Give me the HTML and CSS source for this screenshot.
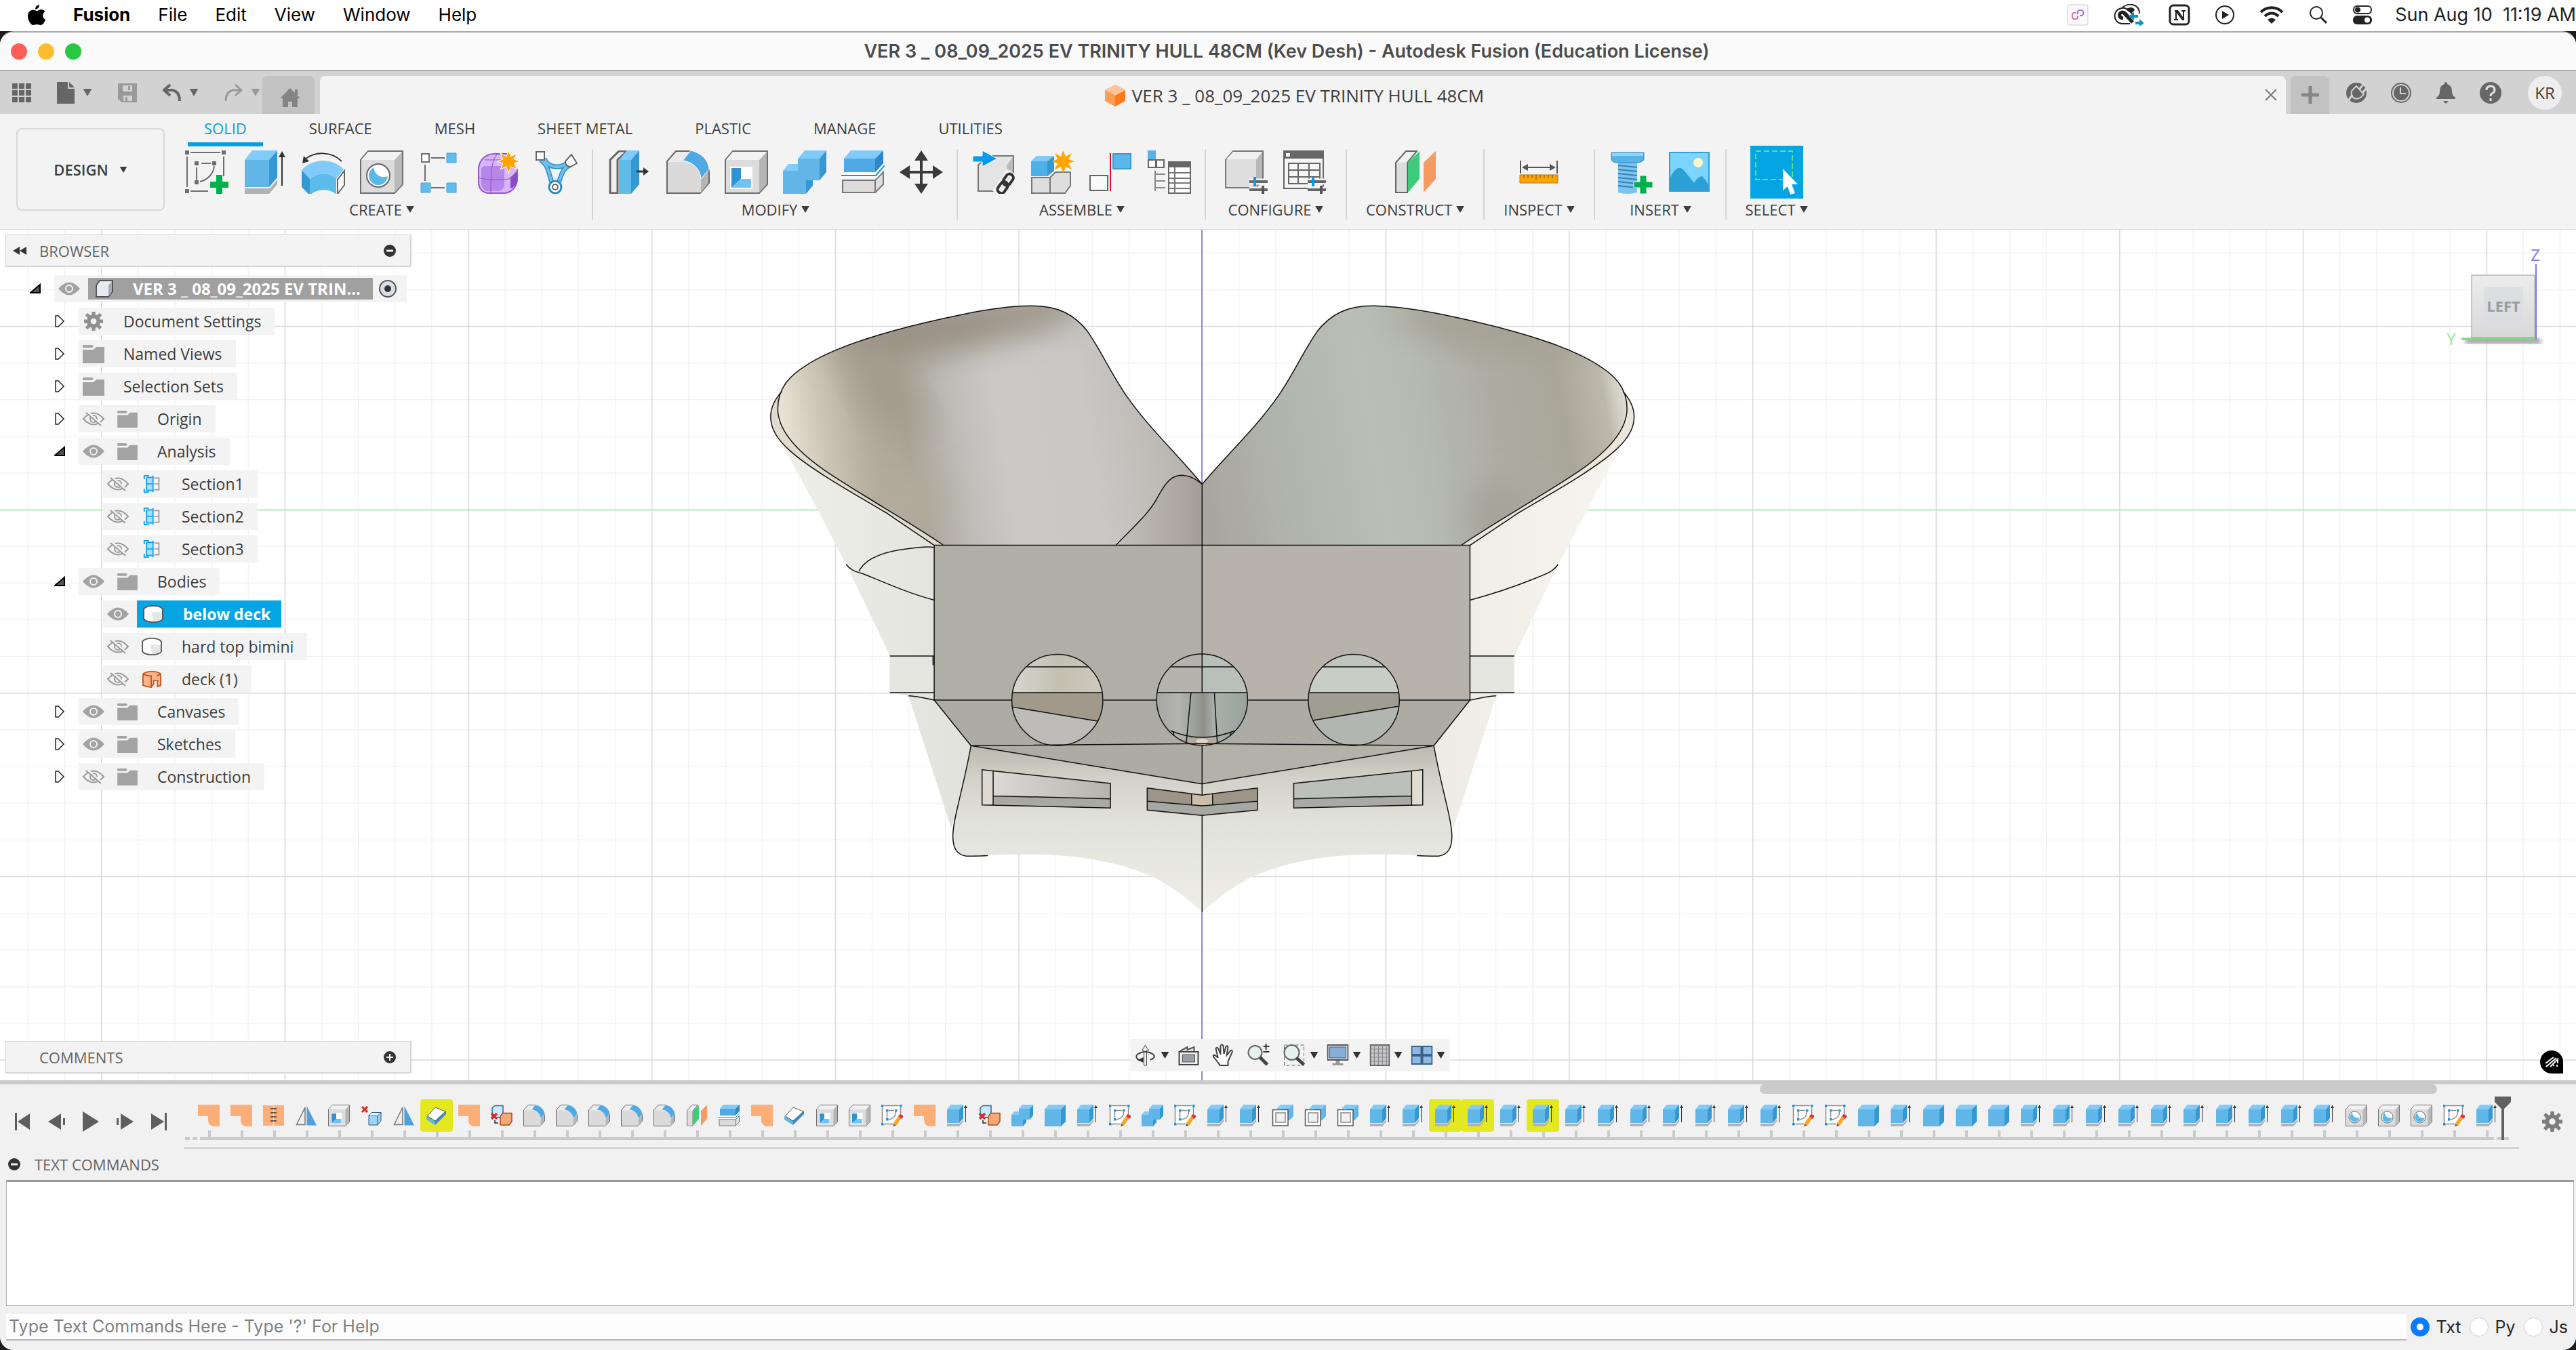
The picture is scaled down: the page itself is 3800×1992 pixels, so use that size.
FILE: index.html
```html
<!DOCTYPE html>
<html lang="en">
<head>
<meta charset="utf-8">
<title>VER 3 _ 08_09_2025 EV TRINITY HULL 48CM - Autodesk Fusion</title>
<link rel="stylesheet" href="styles.css">
</head>
<body>
<svg class="defs" aria-hidden="true">
  <!-- Feature icons -->
  <symbol id="sketch" viewBox="0 0 64 64"><g fill="none" stroke="#6e6e6e" stroke-width="2"><path d="M8 3H52M24 19H38M8 60H34M3 9V54M57 9V38M17 25V46M43 23C42 34 34 43 22 46"/></g><path d="M0 0h6v6H0zM54 0h6v6h-6zM0 57h6v6H0zM14 16h6v6h-6zM40 16h6v6h-6zM14 44h6v6h-6z" fill="#6e6e6e"/><path d="M46 36h9v10h9v9h-9v9H46v-9h-9v-9h9z" fill="#00b04f"/></symbol>
  <symbol id="sketchT" viewBox="0 0 64 64"><path d="M3 3H59V59H3z" fill="#fff"/><g fill="none" stroke="#888" stroke-width="3"><path d="M8 3H52M3 8V56M57 8V36M8 57H34M17 22V38M43 22C43 34 34 42 22 44M22 17H38"/></g><path d="M0 0h7v7H0zM54 0h7v7h-7zM0 54h7v7H0zM14 14h7v7h-7zM40 14h7v7h-7zM14 40h7v7h-7z" fill="#1d8ed8"/><path d="M36 54L50 34l9 6-13 20-11 4z" fill="#f8a72b"/><path d="M50 34l5-6 10 4v4l-6 6z" fill="#e5303a"/><path d="M35 64l1-7 7 4z" fill="#555"/></symbol>
  <symbol id="ext" viewBox="0 0 64 64"><path d="M2 14H38V54H2z" fill="#62b5e7"/><path d="M2 14L13 0H50L38 14z" fill="#80cbfa"/><path d="M38 14L50 0V40L38 54z" fill="#3499d3"/><path d="M2 56H39L50 43V50L38 64H2z" fill="#b2b2b2"/><path d="M57 8V52" stroke="#333" stroke-width="2"/><path d="M57 1L62 10H52z" fill="#333"/></symbol>
  <symbol id="box" viewBox="0 0 64 64"><path d="M2 14H50V64H2z" fill="#62b5e7"/><path d="M2 14L14 0H64L50 14z" fill="#80cbfa"/><path d="M50 14L64 0V50L50 64z" fill="#3499d3"/></symbol>
  <symbol id="revolve" viewBox="0 0 64 64"><path d="M5 13C20 1 44 1 59 16" fill="none" stroke="#333" stroke-width="2"/><path d="M1 19L3 8 11 16z" fill="#333"/><path d="M0 29C16 11 46 11 62 28L51 42C40 32 24 32 12 42z" fill="#80cbfa"/><path d="M0 29L12 42V66L0 54z" fill="#3499d3"/><path d="M12 42C24 32 40 32 51 42V65C42 56 22 56 12 66z" fill="#5bbcec"/><path d="M53 43L63 30V51L53 64z" fill="#fff" stroke="#666" stroke-width="2"/></symbol>
  <symbol id="hole" viewBox="0 0 64 64"><path d="M1 14L12 1H63V50L51 63H1z" fill="#dcdcdc" stroke="#6e6e6e" stroke-width="2"/><path d="M51 14L62 2V50L51 62z" fill="#b9b9b9"/><path d="M2 14L12 2H62L51 14z" fill="#f2f2f2"/><circle cx="27" cy="37" r="17" fill="#fff" stroke="#666" stroke-width="2"/><path d="M20 25A14 14 0 1 0 41 38C31 42 22 36 20 25z" fill="#5bb9ea"/></symbol>
  <symbol id="pattern" viewBox="0 0 64 64"><path d="M5 5h11v12H5z" fill="#fff" stroke="#6e6e6e" stroke-width="2"/><path d="M42 4h14v14H42zM4 48h14v14H4zM42 48h14v14H42z" fill="#5fbcee" stroke="#4d9fd0" stroke-width="1"/><path d="M19 11H39M19 55H39M10 21V45" stroke="#6e6e6e" stroke-width="2"/></symbol>
  <symbol id="form" viewBox="0 0 64 64"><path d="M3 26C4 14 14 5 26 5H44L60 28V44C58 56 50 63 40 63H16C7 61 3 55 3 46z" fill="#d8b6fa" stroke="#9457cc" stroke-width="2"/><path d="M7 27Q8 23 13 23H36Q41 23 41 28V50Q40 59 32 60H16Q7 58 7 48z" fill="#b686ea"/><path d="M50 40L60 30V44Q58 54 50 56z" fill="#8a4fc4"/><path d="M3 40C14 44 36 44 48 42L60 32M30 6C21 16 21 40 21 62M12 14H40" fill="none" stroke="#8a4fc4" stroke-width="1"/><path d="M47 0l4 9 9-5-5 9 9 3-9 3 5 9-9-4-4 10-3-10-9 4 4-9-9-3 9-3-4-9 9 5z" fill="#ffa400" stroke="#fff" stroke-width="1"/></symbol>
  <symbol id="pipe" viewBox="0 0 64 64"><path d="M8 14C20 20 20 34 26 50M52 22C40 26 40 36 34 50M14 12C20 28 40 26 48 18" fill="none" stroke="#2f8dc4" stroke-width="7"/><path d="M8 14C20 20 20 34 26 50M52 22C40 26 40 36 34 50M14 12C20 28 40 26 48 18" fill="none" stroke="#6cc0ee" stroke-width="4"/><path d="M2 2h12v12H2z" fill="#fff" stroke="#666" stroke-width="2"/><path d="M54 6l8 13-9 5q-8 0-8-8z" fill="#fff" stroke="#666" stroke-width="2"/><circle cx="30" cy="54" r="9" fill="#fff" stroke="#2d8bc4" stroke-width="3"/><circle cx="30" cy="54" r="4" fill="none" stroke="#666" stroke-width="2"/></symbol>
  <symbol id="pushpull" viewBox="0 0 64 64"><path d="M3 14L16 1H28L14 14V63H3z" fill="#eee" stroke="#666" stroke-width="3"/><path d="M16 14H34V64H16z" fill="#62bce9"/><path d="M16 14L28 0H46L34 14z" fill="#80cbfa"/><path d="M34 14L46 0V50L34 64z" fill="#3499d3"/><path d="M42 31H54" stroke="#333" stroke-width="3"/><path d="M52 25L60 31 52 37z" fill="#333"/></symbol>
  <symbol id="fillet" viewBox="0 0 64 64"><path d="M1 16L14 1H34C52 4 63 18 63 34V48L50 63H1z" fill="#ebebeb" stroke="#666" stroke-width="2"/><path d="M2 17H24C40 18 50 28 51 42V62H2z" fill="#dadada"/><path d="M51 40L62 28V48L51 62z" fill="#b5b5b5"/><path d="M24 15L36 0C52 4 62 14 63 28L51 42C50 28 40 17 24 15z" fill="#4fa9e4" stroke="#fff" stroke-width="1"/></symbol>
  <symbol id="shell" viewBox="0 0 64 64"><path d="M1 14L12 1H63V50L51 63H1z" fill="#dcdcdc" stroke="#6e6e6e" stroke-width="2"/><path d="M51 14L62 2V50L51 62z" fill="#b5b5b5"/><path d="M2 14L12 2H62L51 14z" fill="#f2f2f2"/><path d="M8 24H41V57H8z" fill="#fff"/><path d="M10 26H24V42L10 55z" fill="#2f92d2"/><path d="M24 42H39V55H10z" fill="#70c4f4"/></symbol>
  <symbol id="combine" viewBox="0 0 64 64"><path d="M22 12L32 0H64L54 12z" fill="#80cbfa"/><path d="M0 30L8 20H24L22 30z" fill="#80cbfa"/><path d="M22 12H54V44H34V64H0V30H22z" fill="#62b5e7"/><path d="M54 12L64 0V32L54 44zM34 44H44V52L34 64z" fill="#3499d3"/></symbol>
  <symbol id="split" viewBox="0 0 64 64"><path d="M2 44H50V62H2zM50 44L62 32V50L50 62" fill="#dcdcdc" stroke="#777" stroke-width="2"/><path d="M4 12H50V32H4z" fill="#4fa9e4"/><path d="M4 12L14 0H62L50 12z" fill="#80cbfa"/><path d="M50 12L62 0V20L50 32z" fill="#2f86c8"/><path d="M0 37H51L64 22" fill="none" stroke="#fff" stroke-width="7"/><path d="M0 37H51L64 22" fill="none" stroke="#079bdf" stroke-width="2"/></symbol>
  <symbol id="move" viewBox="0 0 64 64"><path d="M32 8V56M8 32H56" stroke="#3a3a3a" stroke-width="4"/><path d="M32 0l10 15H22zM32 64l10-15H22zM0 32l15-10v20zM64 32L49 22v20z" fill="#3a3a3a"/></symbol>
  <symbol id="insertlink" viewBox="0 0 64 64"><path d="M8 22L20 8H60V46L50 60H8z" fill="#e4e4e4" stroke="#777" stroke-width="2"/><path d="M50 22L59 10V46L50 58z" fill="#bbb"/><path d="M0 8H14V0L36 12 14 24V17H0z" fill="#079bf0" stroke="#fff" stroke-width="1"/><g transform="rotate(35 48 50)" fill="none"><path d="M42 34h10v16H42zM42 48h10v16H42z" stroke="#f3f3f3" stroke-width="9"/><rect x="42" y="33" width="11" height="18" rx="5" stroke="#333" stroke-width="4"/><rect x="42" y="47" width="11" height="18" rx="5" stroke="#333" stroke-width="4"/></g></symbol>
  <symbol id="newcomp" viewBox="0 0 64 64"><path d="M1 40H28V63H1zM28 40L36 32H58V52L50 63H28z" fill="#dedede" stroke="#777" stroke-width="2"/><path d="M0 16H24V38H0z" fill="#4fb0e8"/><path d="M0 16L8 8H34L24 16z" fill="#80cbfa"/><path d="M24 16L34 8V30L24 38z" fill="#3499d3"/><path d="M47 0l4 9 9-5-5 9 9 3-9 3 5 9-9-4-4 10-3-10-9 4 4-9-9-3 9-3-4-9 9 5z" fill="#ffa400"/></symbol>
  <symbol id="joint" viewBox="0 0 64 64"><path d="M1 37H27V59H1z" fill="#fafafa" stroke="#666" stroke-width="2"/><path d="M31 4V60" stroke="#e0112b" stroke-width="2"/><path d="M35 5H61V27H35z" fill="#5bb7ea" stroke="#3b9bd0" stroke-width="2"/></symbol>
  <symbol id="bom" viewBox="0 0 64 64"><path d="M0 0h12v13H0z" fill="#55b3e8"/><path d="M1 14h11v11H1zM13 14h11v11H13z" fill="#fff" stroke="#666" stroke-width="2"/><path d="M11 30V60M11 35H26M11 45H26M11 55H26" fill="none" stroke="#888" stroke-width="2"/><path d="M31 17H63V63H31z" fill="#fff" stroke="#666" stroke-width="2"/><path d="M31 17H63V25H31z" fill="#666"/><path d="M31 33H63M31 41H63M31 48H63M31 56H63M40 25V63" stroke="#777" stroke-width="2"/></symbol>
  <symbol id="config" viewBox="0 0 64 64"><path d="M1 14L12 1H56V42L46 55H1z" fill="#dedede" stroke="#777" stroke-width="2"/><path d="M46 14L55 2V42L46 54z" fill="#b8b8b8"/><path d="M2 13L12 2H55L46 13z" fill="#f0f0f0"/><path d="M36 46H64M36 58H64" stroke="#f3f3f3" stroke-width="9"/><path d="M36 46H63M36 58H63" stroke="#666" stroke-width="4"/><path d="M44 39V53" stroke="#079bf0" stroke-width="4"/><path d="M56 52V64" stroke="#555" stroke-width="4"/></symbol>
  <symbol id="configtable" viewBox="0 0 64 64"><path d="M1 1H59V56H1z" fill="#f5f5f5" stroke="#666" stroke-width="2"/><path d="M0 0H60V12H0z" fill="#666"/><path d="M4 4h6v5H4z" fill="#fff"/><path d="M8 19H54V49H8zM8 29H54M8 39H54M22 19V49M38 19V49" fill="none" stroke="#666" stroke-width="2"/><path d="M36 46H64M36 58H64" stroke="#f3f3f3" stroke-width="9"/><path d="M36 46H63M36 58H63" stroke="#666" stroke-width="4"/><path d="M44 39V53" stroke="#079bf0" stroke-width="4"/><path d="M56 52V64" stroke="#555" stroke-width="4"/></symbol>
  <symbol id="plane" viewBox="0 0 64 64"><path d="M3 18L18 1H34L20 18V62H3z" fill="#f0f0f0" stroke="#666" stroke-width="2"/><path d="M4 18H18V61H4z" fill="#dcdcdc"/><path d="M21 18L38 1V42L21 62z" fill="#3ecb7c"/><path d="M44 18L62 1V42L44 62z" fill="#f59a62"/></symbol>
  <symbol id="measure" viewBox="0 0 64 64"><path d="M5 15V34M59 15V34M9 25H55" stroke="#555" stroke-width="2"/><path d="M7 25l9-5v10zM57 25l-9-5v10z" fill="#555"/><path d="M4 36H60V48H4z" fill="#ffa400" stroke="#a9762a" stroke-width="1"/><path d="M10 36v5M16 36v5M22 36v5M28 36v7M34 36v5M40 36v5M46 36v5M52 36v5" stroke="#6b4a12" stroke-width="1"/></symbol>
  <symbol id="bolt" viewBox="0 0 64 64"><path d="M12 14H40V62Q26 66 12 62z" fill="#7cc3ee"/><path d="M12 22l28 3M12 28l28 3M12 34l28 3M12 40l28 3M12 46l28 3M12 52l28 3" stroke="#3780b2" stroke-width="2"/><path d="M2 3H50V14Q46 18 40 18H10Q4 18 2 14z" fill="#58b4e6" stroke="#2f86b8" stroke-width="1"/><path d="M3 4H49V8H3z" fill="#8ed4fb"/><path d="M44 37h10v9h9v9h-9v9H44v-9h-9v-9h9z" fill="#00b04f" stroke="#f3f3f3" stroke-width="1"/></symbol>
  <symbol id="image" viewBox="0 0 64 64"><path d="M2 3H60V60H2z" fill="#7dd4ff" stroke="#35a0d6" stroke-width="2"/><circle cx="44" cy="18" r="7" fill="#fdf6c8"/><path d="M3 40Q12 20 22 28Q32 40 38 48Q44 38 50 38Q56 44 59 50V59H3z" fill="#2ba1d8"/></symbol>
  <symbol id="select" viewBox="0 0 78 78"><path d="M8 8H62V50H8z" fill="none" stroke="#55e49a" stroke-width="2" stroke-dasharray="8 4"/><path d="M48 34L70 57H61L66 70 59 72 55 60 48 66z" fill="#fff"/></symbol>
  <symbol id="flange" viewBox="0 0 64 64"><path d="M0 0H64V64H44Q30 60 30 46V34H0z" fill="#fcae78"/></symbol>
  <symbol id="unfold" viewBox="0 0 64 64"><path d="M0 2H62V62H0z" fill="#fcae78"/><path d="M31 4V62" stroke="#fff" stroke-width="2"/><path d="M22 12H40M22 24H40M22 36H40M22 48H40" stroke="#333" stroke-width="3"/></symbol>
  <symbol id="mirror" viewBox="0 0 64 64"><path d="M28 8V59H3z" fill="#eee" stroke="#777" stroke-width="3"/><path d="M33 4L62 61H33z" fill="#4fa0dc"/></symbol>
  <symbol id="delete" viewBox="0 0 64 64"><path d="M4 6L20 22M20 6L4 22" stroke="#e02828" stroke-width="6"/><path d="M24 32L33 23H60V48L50 60H24z" fill="#9fd2f7" stroke="#25597f" stroke-width="2"/><path d="M25 33L33 24H59L50 33z" fill="#f2f9ff"/><path d="M24 33H50V60M50 33L60 23" fill="none" stroke="#25597f" stroke-width="2"/></symbol>
  <symbol id="thicken" viewBox="0 0 64 64"><path d="M3 34L26 48 60 18V28L28 60 3 44z" fill="#3a8ed0"/><path d="M3 34L28 50V60L3 44z" fill="#62b5e7"/><path d="M5 34L28 8 58 20 28 48z" fill="#fff" stroke="#555" stroke-width="2"/></symbol>
  <symbol id="convert" viewBox="0 0 64 64"><path d="M4 10L12 3H36V28L28 38H4z" fill="#cde8fb" stroke="#25699c" stroke-width="3"/><path d="M28 34L36 25H62V50L54 60H28z" fill="#f5a978" stroke="#b14a15" stroke-width="3"/><path d="M2 26L18 42M18 26L2 42" stroke="#e02828" stroke-width="7"/><path d="M12 46V54H22" fill="none" stroke="#222" stroke-width="3"/></symbol>
  <symbol id="offset" viewBox="0 0 64 64"><path d="M16 10L26 0H64V34L52 46H44V16z" fill="#62b5e7"/><path d="M16 10L26 0H64L52 12H16z" fill="#80cbfa"/><path d="M3 15H48V62H3z" fill="#fff" stroke="#555" stroke-width="3"/><path d="M12 24H40V52H12z" fill="#f1f1f1" stroke="#888" stroke-width="3"/></symbol>
  <!-- Browser tree icons -->
  <symbol id="eye" viewBox="0 0 32 20"><path d="M0 10Q16-9 32 10Q16 29 0 10z" fill="#a3a3a3"/><circle cx="16" cy="10" r="5" fill="#a3a3a3" stroke="#f3f3f3" stroke-width="2"/></symbol>
  <symbol id="eyeoff" viewBox="0 0 32 20"><path d="M1 10Q16-7 31 10Q16 27 1 10z" fill="none" stroke="#9a9a9a" stroke-width="2"/><circle cx="16" cy="10" r="5" fill="none" stroke="#9a9a9a" stroke-width="2"/><path d="M6 0L28 19" stroke="#f3f3f3" stroke-width="4"/><path d="M5 1L27 20" stroke="#9a9a9a" stroke-width="2"/></symbol>
  <symbol id="folder" viewBox="0 0 32 28"><path d="M0 1H14L16 3 14 5H0zM0 8H16L20 4H32V28H0z" fill="#a3a3a3"/></symbol>
  <symbol id="gear" viewBox="0 0 32 32"><path d="M13 0h6v5l3 1 4-4 4 4-4 4 1 3h5v6h-5l-1 3 4 4-4 4-4-4-3 1v5h-6v-5l-3-1-4 4-4-4 4-4-1-3H0v-6h5l1-3-4-4 4-4 4 4 3-1zM16 11a5 5 0 1 0 0 10 5 5 0 1 0 0-10z" fill="currentColor" fill-rule="evenodd"/></symbol>
  <symbol id="section" viewBox="0 0 28 30"><path d="M5 4H15V26H5z" fill="#a9def8"/><path d="M9 1H1V7M9 29H1V23M16 1V29M5 4V26H16M5 4H16M5 15H16" fill="none" stroke="#079bf0" stroke-width="2"/><path d="M18 5H26V25H18M18 15H26" fill="none" stroke="#999" stroke-width="2"/></symbol>
  <symbol id="body" viewBox="0 0 32 28"><path d="M1 6V22Q5 27 16 27T31 22V6Q27 1 16 1T1 6z" fill="#fff" stroke="#555" stroke-width="2"/><path d="M14 11H30V22Q24 26 16 26z" fill="#e6e6e6"/></symbol>
  <symbol id="bodyorange" viewBox="0 0 32 28"><path d="M2 6Q6 2 16 2T30 6V24L25 26V16H19V22L15 27 9 26 2 24z" fill="#f9b48c" stroke="#c4551b" stroke-width="2"/><path d="M2 6Q8 9 15 9V26M30 6L24 9" fill="none" stroke="#c4551b" stroke-width="2"/></symbol>
  <symbol id="comp" viewBox="0 0 28 26"><path d="M2 8L7 1H26V17L20 25H2z" fill="#e6ebf2" stroke="#555" stroke-width="2"/><path d="M20 8L25 2V17L20 24z" fill="#a5acb8"/></symbol>
  <symbol id="open" viewBox="0 0 16 14"><path d="M1 13H15V1z" fill="#555" stroke="#000" stroke-width="2"/></symbol>
  <symbol id="closed" viewBox="0 0 14 18"><path d="M1 1H5L13 9 5 17H1z" fill="#fff" stroke="#222" stroke-width="1.500"/></symbol>
  <symbol id="caret" viewBox="0 0 14 12"><path d="M0 0H14L7 12z" fill="currentColor"/></symbol>
  <symbol id="minus" viewBox="0 0 20 20"><circle cx="10" cy="10" r="9" fill="#333"/><path d="M5 10H15" stroke="#f3f3f3" stroke-width="3"/></symbol>
  <symbol id="plus" viewBox="0 0 20 20"><circle cx="10" cy="10" r="9" fill="#333"/><path d="M5 10H15M10 5V15" stroke="#f3f3f3" stroke-width="2"/></symbol>
</svg>

<header class="menubar">
  <nav class="menus">
    <a href="#" aria-label="Apple"><svg width="26" height="32" viewBox="0 0 26 32"><path d="M17 1C17 5 14 8 11 7.500C11 4 14 1 17 1zM13 10C15 10 17 8 20 8C22 8 24 9 25.500 11C21 14 21 20 26 23C24.500 27 22 31 19 31C17 31 16 30 13.500 30C11 30 10 31 8 31C4 31 0 23 0 18C0 12 4 8.500 8 8.500C10 8.500 12 10 13 10z"/></svg></a>
    <a href="#" class="app">Fusion</a><a href="#">File</a><a href="#">Edit</a><a href="#">View</a><a href="#">Window</a><a href="#">Help</a>
  </nav>
  <div class="status">
    <svg width="32" height="32" viewBox="0 0 32 32"><rect x="1" y="1" width="30" height="30" rx="3" fill="#faf8fb" stroke="#ccc"/><g fill="none" stroke-width="2"><path d="M14 13H11Q8 13 8 16V19Q8 22 11 22H13Q16 22 16 19V17" stroke="#d779b5"/><path d="M16 15V12Q16 9 19 9H21Q24 9 24 12V14Q24 17 21 17H19" stroke="#a27ce0"/></g></svg>
    <svg width="44" height="32" viewBox="0 0 44 32"><path d="M18 8C24 3 30 5 31 9L26 14z" fill="#222"/><g fill="none" stroke="#222" stroke-width="2"><path d="M24 29H12C-2 27-2 8 12 6C20-3 38-1 38 14"/><path d="M12 6Q18 5 24 11L30 17"/><path d="M28 27L14 12M14 21C6 20 8 12 13 12C18 12 20 18 24 22" stroke-width="5"/></g><path d="M36 16h-6v-4l-8 6 8 6v-4h6zM32 26h6v-4l7 6-7 5v-3h-6z" fill="#0b93b8"/></svg>
    <svg width="32" height="32" viewBox="0 0 32 32"><rect x="2" y="2" width="28" height="28" rx="5" fill="#fff" stroke="#222" stroke-width="3"/><path d="M9 9H14L21 19V11H19V9H25V11H23V24H20L12 13V22H14V24H8V22H10V11H9z" fill="#222"/></svg>
    <svg width="28" height="28" viewBox="0 0 28 28"><circle cx="14" cy="14" r="13" fill="none" stroke="#222" stroke-width="2"/><path d="M10 8L20 14 10 20z" fill="#222"/></svg>
    <svg width="36" height="28" viewBox="0 0 36 28"><g fill="none" stroke="#222" stroke-width="4"><path d="M2 10C11 1 25 1 34 10M8 16C14 10 22 10 28 16"/></g><path d="M12 21Q18 16 24 21L18 27z" fill="#222"/></svg>
    <svg width="28" height="28" viewBox="0 0 28 28"><circle cx="11" cy="11" r="9" fill="none" stroke="#222" stroke-width="2"/><path d="M18 18L26 26" stroke="#222" stroke-width="3"/></svg>
    <svg width="28" height="28" viewBox="0 0 28 28"><rect x="1" y="1" width="26" height="11" rx="5" fill="none" stroke="#222" stroke-width="2"/><circle cx="7" cy="6.500" r="4" fill="#222"/><rect x="0" y="15" width="28" height="13" rx="6" fill="#222"/><circle cx="21" cy="21.500" r="4" fill="#fff"/></svg>
    <time class="clock">Sun Aug 10&nbsp; 11:19 AM</time>
  </div>
</header>

<main class="window">
  <div class="titlebar">
    <div class="lights"><i class="red"></i><i class="amber"></i><i class="green"></i></div>
    <h1>VER 3 _ 08_09_2025 EV TRINITY HULL 48CM (Kev Desh) - Autodesk Fusion (Education License)</h1>
  </div>

  <div class="tabstrip">
    <div class="quick">
      <button aria-label="Data panel"><svg width="28" height="28" viewBox="0 0 28 28"><path d="M0 0h8v8H0zM10 0h8v8h-8zM20 0h8v8h-8zM0 10h8v8H0zM10 10h8v8h-8zM20 10h8v8h-8zM0 20h8v8H0zM10 20h8v8h-8zM20 20h8v8h-8z" fill="#666"/></svg></button>
      <button aria-label="File" class="split"><svg width="26" height="32" viewBox="0 0 26 32"><path d="M0 0H16V10H26V32H0zM18 0L26 8H18z" fill="#666"/></svg><svg width="14" height="11"><use href="#caret"/></svg></button>
      <button aria-label="Save" class="dim"><svg width="28" height="28" viewBox="0 0 28 28"><path d="M0 0H28V28H6L0 23zM7 3V12H21V3zM8 18V26H21V18z" fill="#999" fill-rule="evenodd"/><path d="M15 4H18V10H15zM11 20H14V26H11z" fill="#999"/></svg></button>
      <button aria-label="Undo" class="split"><svg width="27" height="26" viewBox="0 0 27 26"><path d="M11 1L2 9 11 17M3 9H14Q25 11 25 25" fill="none" stroke="#666" stroke-width="4"/></svg><svg width="14" height="11"><use href="#caret"/></svg></button>
      <button aria-label="Redo" class="split dim"><svg width="27" height="26" viewBox="0 0 27 26"><path d="M16 1L25 9 16 17M24 9H13Q2 11 2 25" fill="none" stroke="#999" stroke-width="3"/></svg><svg width="14" height="11"><use href="#caret"/></svg></button>
    </div>
    <button class="home" aria-label="Home"><svg width="30" height="28" viewBox="0 0 30 28"><path d="M15 0L22 7V2H26V11L30 15H26V28H18V20H12V28H4V15H0z" fill="#848484"/></svg></button>
    <div class="doctab">
      <div class="docname"><svg width="30" height="32" viewBox="0 0 30 32"><path d="M15 0L30 8V24L15 32 0 24V8z" fill="#ff7a1a"/><path d="M15 0L30 8 15 16 0 8z" fill="#ffc59a"/><path d="M0 8L15 16V32L0 24z" fill="#ff9c50"/></svg><span>VER 3 _ 08_09_2025 EV TRINITY HULL 48CM</span></div>
      <button class="close" aria-label="Close tab"><svg width="18" height="18" viewBox="0 0 18 18"><path d="M1 1L17 17M17 1L1 17" stroke="#777" stroke-width="2"/></svg></button>
    </div>
    <button class="newtab" aria-label="New tab"><svg width="26" height="26" viewBox="0 0 26 26"><path d="M13 0V26M0 13H26" stroke="#858585" stroke-width="5"/></svg></button>
    <div class="account">
      <button aria-label="Extensions"><svg width="32" height="32" viewBox="0 0 32 32"><circle cx="16" cy="16" r="15" fill="#666"/><path d="M5 28Q6 22 11 20M20 11l7-8M25 16l6-7" fill="none" stroke="#d2d2d2" stroke-width="3"/><path d="M16 6L27 18 22 23Q15 27 10 22Q6 15 12 10z" fill="none" stroke="#d2d2d2" stroke-width="2"/></svg></button>
      <button aria-label="Job status"><svg width="32" height="32" viewBox="0 0 32 32"><circle cx="16" cy="16" r="14" fill="none" stroke="#666" stroke-width="2"/><circle cx="16" cy="16" r="11" fill="#666"/><path d="M15 8V17H23" fill="none" stroke="#d2d2d2" stroke-width="2"/></svg></button>
      <button aria-label="Notifications"><svg width="32" height="32" viewBox="-2 0 32 32"><path d="M14 0Q16 0 16 3Q23 5 23 14Q23 20 28 23V25H0V23Q5 20 5 14Q5 5 12 3Q12 0 14 0zM10 28H18L14 32z" fill="#666"/></svg></button>
      <button aria-label="Help"><svg width="32" height="32" viewBox="0 0 32 32"><circle cx="16" cy="16" r="16" fill="#666"/><path d="M10 12Q10 6 16 6T22 12Q22 15 18 17Q16 18 16 21M16 24V28" fill="none" stroke="#e4e4e4" stroke-width="3"/></svg></button>
      <button class="avatar">KR</button>
    </div>
  </div>

  <div class="ribbon">
    <button class="workspace">DESIGN <svg width="12" height="9"><use href="#caret"/></svg></button>
    <div class="tools">
      <nav class="tabs"><a href="#" class="on">SOLID</a><a href="#">SURFACE</a><a href="#">MESH</a><a href="#">SHEET METAL</a><a href="#">PLASTIC</a><a href="#">MANAGE</a><a href="#">UTILITIES</a></nav>
      <div class="groups">
        <section class="group"><div class="icons">
          <button aria-label="Create Sketch"><svg><use href="#sketch"/></svg></button><button aria-label="Extrude"><svg><use href="#ext"/></svg></button><button aria-label="Revolve"><svg><use href="#revolve"/></svg></button><button aria-label="Hole"><svg><use href="#hole"/></svg></button><button aria-label="Pattern"><svg><use href="#pattern"/></svg></button><button aria-label="Create Form"><svg><use href="#form"/></svg></button><button aria-label="Derive"><svg><use href="#pipe"/></svg></button></div>
          <button class="label">CREATE <svg><use href="#caret"/></svg></button></section>
        <section class="group"><div class="icons">
          <button aria-label="Press Pull"><svg><use href="#pushpull"/></svg></button><button aria-label="Fillet"><svg><use href="#fillet"/></svg></button><button aria-label="Shell"><svg><use href="#shell"/></svg></button><button aria-label="Combine"><svg><use href="#combine"/></svg></button><button aria-label="Split Body"><svg><use href="#split"/></svg></button><button aria-label="Move"><svg><use href="#move"/></svg></button></div>
          <button class="label">MODIFY <svg><use href="#caret"/></svg></button></section>
        <section class="group"><div class="icons">
          <button aria-label="Insert Component"><svg><use href="#insertlink"/></svg></button><button aria-label="New Component"><svg><use href="#newcomp"/></svg></button><button aria-label="Joint"><svg><use href="#joint"/></svg></button><button aria-label="Bill of Materials"><svg><use href="#bom"/></svg></button></div>
          <button class="label">ASSEMBLE <svg><use href="#caret"/></svg></button></section>
        <section class="group wide"><div class="icons">
          <button aria-label="Configure Design"><svg><use href="#config"/></svg></button><button aria-label="Configuration Table"><svg><use href="#configtable"/></svg></button></div>
          <button class="label">CONFIGURE <svg><use href="#caret"/></svg></button></section>
        <section class="group wide"><div class="icons"><button aria-label="Offset Plane"><svg><use href="#plane"/></svg></button></div>
          <button class="label">CONSTRUCT <svg><use href="#caret"/></svg></button></section>
        <section class="group wide"><div class="icons"><button aria-label="Measure"><svg><use href="#measure"/></svg></button></div>
          <button class="label">INSPECT <svg><use href="#caret"/></svg></button></section>
        <section class="group"><div class="icons"><button aria-label="Insert Fastener"><svg><use href="#bolt"/></svg></button><button aria-label="Canvas"><svg><use href="#image"/></svg></button></div>
          <button class="label">INSERT <svg><use href="#caret"/></svg></button></section>
        <section class="group wide last"><div class="icons"><button class="picked" aria-label="Select"><svg><use href="#select"/></svg></button></div>
          <button class="label">SELECT <svg><use href="#caret"/></svg></button></section>
      </div>
    </div>
  </div>

  <div class="viewport">
    <svg class="scene" viewBox="0 338 3800 1256" preserveAspectRatio="xMidYMid slice" role="img" aria-label="Hull model, left view">
      <defs>
        <pattern id="minor" width="54.130" height="54.130" patternUnits="userSpaceOnUse" x="1773" y="751"><path d="M0 .5H55M.5 0V55" stroke="#f0f0f0" stroke-width="1.500"/></pattern>
        <pattern id="major" width="270.650" height="270.650" patternUnits="userSpaceOnUse" x="1773" y="751"><path d="M0 .5H271M.5 0V271" stroke="#d6d6d6" stroke-width="1.500"/></pattern>
        <linearGradient id="gl" gradientUnits="userSpaceOnUse" x1="60" y1="380" x2="780" y2="300"><stop offset="0" stop-color="#ece7da"/><stop offset=".1" stop-color="#cdc6b6"/><stop offset=".2" stop-color="#b5ad9d"/><stop offset=".3" stop-color="#aaa498"/><stop offset=".42" stop-color="#bfbdb8"/><stop offset=".52" stop-color="#cac9c6"/><stop offset=".72" stop-color="#cac8c5"/><stop offset=".86" stop-color="#c0bdb8"/><stop offset="1" stop-color="#b2ada7"/></linearGradient>
        <linearGradient id="gr" gradientUnits="userSpaceOnUse" x1="782" y1="420" x2="1515" y2="330"><stop offset="0" stop-color="#a8a69f"/><stop offset=".18" stop-color="#b1b4ad"/><stop offset=".4" stop-color="#b9beb7"/><stop offset=".52" stop-color="#b6bab2"/><stop offset=".68" stop-color="#aeada3"/><stop offset=".85" stop-color="#aaa69a"/><stop offset=".95" stop-color="#bcb8ab"/><stop offset="1" stop-color="#e2e0d6"/></linearGradient>
        <linearGradient id="nose"><stop offset="0" stop-color="#c4c0bb"/><stop offset="1" stop-color="#a49e96"/></linearGradient>
        <linearGradient id="low" x1="0" y1="0" x2="0" y2="1"><stop offset="0" stop-color="#bbb7ad"/><stop offset=".2" stop-color="#d3d1c9"/><stop offset=".45" stop-color="#e1e1db"/><stop offset="1" stop-color="#efefe8"/></linearGradient>
        <linearGradient id="sideL"><stop offset="0" stop-color="#eeefe8"/><stop offset="1" stop-color="#dfe1da"/></linearGradient>
        <linearGradient id="sideR"><stop offset="0" stop-color="#edebe3"/><stop offset="1" stop-color="#f6f5ef"/></linearGradient>
        <linearGradient id="hole2"><stop offset="0" stop-color="#a3a4a0"/><stop offset=".25" stop-color="#b4b4b1"/><stop offset=".4" stop-color="#9da09c"/><stop offset=".5" stop-color="#8f8f86"/><stop offset=".6" stop-color="#a9b0ac"/><stop offset="1" stop-color="#98a09b"/></linearGradient>
        <linearGradient id="win"><stop offset="0" stop-color="#deddd9"/><stop offset="1" stop-color="#b8b2ac"/></linearGradient>
        <linearGradient id="lens"><stop offset="0" stop-color="#d9d7d0"/><stop offset=".5" stop-color="#c3c0b2"/><stop offset="1" stop-color="#cecbbf"/></linearGradient>
        <filter id="soft" x="-50%" y="-50%" width="200%" height="200%"><feGaussianBlur stdDeviation="34"/></filter>
        <clipPath id="cl"><path d="M338 628C280 572 200 510 135 448C80 394 55 345 55 300C55 250 75 220 105 194C165 140 270 102 370 73C415 60 460 52 490 52C535 52 562 72 585 112C608 158 625 212 652 268C690 345 740 410 782 482V628z"/></clipPath>
        <clipPath id="cr"><path d="M1227 628C1285 572 1365 510 1430 448C1485 394 1510 345 1510 300C1510 250 1490 220 1460 194C1400 140 1295 102 1195 73C1150 60 1105 52 1075 52C1030 52 1003 72 980 112C957 158 940 212 913 268C875 345 825 410 782 482V628z"/></clipPath>
        <clipPath id="p1"><ellipse cx="534" cy="1002" rx="78" ry="110"/></clipPath>
        <clipPath id="p2"><ellipse cx="782" cy="1001" rx="78" ry="110"/></clipPath>
        <clipPath id="p3"><ellipse cx="1042" cy="1002" rx="78" ry="110"/></clipPath>
      </defs>
      <rect y="330" width="3800" height="1270" fill="#fff"/>
      <rect y="330" width="3800" height="1270" fill="url(#minor)"/>
      <rect y="330" width="3800" height="1270" fill="url(#major)"/>
      <path d="M0 752H3800" stroke="#b9f3c0" stroke-width="2"/>
      <path d="M1773 338V1594" stroke="#8c8cd8" stroke-width="2"/>
      <g transform="translate(1100 419) scale(.86097 .61224)">
        <path d="M64 390L120 535 172 675 232 850 247 896V984L279 992 352 1310 400 1112 340 600z" fill="url(#sideL)"/>
        <path d="M1501 390L1445 535 1392 675 1333 850 1317 896V984L1286 992 1213 1310 1165 1112 1225 600z" fill="url(#sideR)"/>
        <path d="M247 896H323V984H247zM1241 896H1317V984H1241z" fill="#e6e6e0"/>
        <path d="M62 258C45 285 42 310 43 325C44 350 55 375 75 400C110 445 180 500 240 550L323 629H338L200 500 55 330z" fill="#e0dccd"/>
        <path d="M1503 258C1520 285 1523 310 1522 325C1521 350 1510 375 1490 400C1455 445 1385 500 1325 550L1241 629H1227L1365 500 1510 330z" fill="#eae6da"/>
        <g clip-path="url(#cl)"><rect x="40" y="40" width="760" height="600" fill="url(#gl)"/><ellipse cx="330" cy="110" rx="190" ry="60" transform="rotate(-14 330 110)" fill="#9a9285" filter="url(#soft)"/><ellipse cx="500" cy="60" rx="70" ry="50" fill="#a09a8e" filter="url(#soft)"/><ellipse cx="240" cy="260" rx="40" ry="110" transform="rotate(-22 240 260)" fill="#a19a8c" filter="url(#soft)"/><ellipse cx="280" cy="520" rx="50" ry="80" fill="#b3ac9f" filter="url(#soft)"/><path d="M635 628C660 590 690 555 705 515C715 490 725 462 745 460C760 460 770 468 782 482V628z" fill="url(#nose)"/></g>
        <g clip-path="url(#cr)"><rect x="780" y="40" width="760" height="600" fill="url(#gr)"/><ellipse cx="1280" cy="110" rx="170" ry="50" transform="rotate(14 1280 110)" fill="#a5a194" filter="url(#soft)"/><ellipse cx="1290" cy="560" rx="50" ry="90" fill="#a5a298" filter="url(#soft)"/></g>
        <path d="M323 629H782V1002H323z" fill="#afaea7"/><path d="M782 629H1241V1002H782z" fill="#b7b3aa"/>
        <path d="M323 1002H1241L1179 1112 782 1204 386 1112z" fill="#acaca4"/><path d="M782 1112L1179 1112 782 1204z" fill="#b3b2a9"/>
        <path d="M386 1112C372 1220 355 1290 355 1330C355 1360 362 1375 378 1378C400 1379 430 1373 480 1374C560 1373 640 1390 700 1430C735 1455 765 1490 782 1513C800 1490 830 1455 865 1430C925 1390 1005 1373 1085 1374C1130 1373 1165 1379 1187 1378C1203 1375 1210 1360 1210 1330C1210 1290 1193 1220 1179 1112L782 1204z" fill="url(#low)"/>
        <g clip-path="url(#p1)"><rect x="450" y="880" width="170" height="240" fill="#bebcb8"/><path d="M450 880H620V984H450z" fill="url(#lens)"/><path d="M450 984H620V1056L450 1018z" fill="#a19a8b"/></g>
        <g clip-path="url(#p2)"><rect x="700" y="880" width="170" height="240" fill="url(#hole2)"/><path d="M700 880H782V984H700z" fill="#b4b3ad"/><path d="M782 880H870V984H782z" fill="#b9bfba"/><ellipse cx="782" cy="1104" rx="30" ry="12" fill="#b5aa9e"/><ellipse cx="782" cy="1101" rx="10" ry="6" fill="#ded5ca"/></g>
        <g clip-path="url(#p3)"><rect x="960" y="880" width="170" height="240" fill="#b3b6b0"/><path d="M960 880H1130V922H960z" fill="#c0c5be"/><path d="M960 922H1130V984H960z" fill="#c8cdc6"/><path d="M960 984H1130V1014L960 1054z" fill="#a09d92"/></g>
        <path d="M405 1170L625 1203V1262L405 1255z" fill="url(#win)"/><path d="M405 1170L424 1173V1256L405 1255z" fill="#ddd9ce"/><path d="M424 1233L625 1240V1262L424 1256z" fill="#a9a9a4"/>
        <path d="M1160 1170L939 1203V1262L1160 1255z" fill="#bcbfba"/><path d="M1160 1170L1141 1173V1256L1160 1255z" fill="#dfdcd2"/><path d="M1141 1233L939 1240V1262L1141 1256z" fill="#a9aaa5"/>
        <path d="M688 1214L782 1231 877 1214V1267L782 1280 688 1267z" fill="#9c9588"/><path d="M764 1228L782 1231 800 1228V1254L782 1257 764 1254z" fill="#cabdaa"/><path d="M688 1246L782 1257 877 1246V1267L782 1280 688 1267z" fill="#a8a8a2"/>
        <g class="edges">
          <path d="M338 628C280 572 200 510 135 448C80 394 55 345 55 300C55 250 75 220 105 194C165 140 270 102 370 73C415 60 460 52 490 52C535 52 562 72 585 112C608 158 625 212 652 268C690 345 740 410 782 482"/>
          <path d="M1227 628C1285 572 1365 510 1430 448C1485 394 1510 345 1510 300C1510 250 1490 220 1460 194C1400 140 1295 102 1195 73C1150 60 1105 52 1075 52C1030 52 1003 72 980 112C957 158 940 212 913 268C875 345 825 410 782 482"/>
          <path d="M62 258C45 285 42 310 43 325C44 350 55 375 75 400C110 445 180 500 240 550L323 629M1503 258C1520 285 1523 310 1522 325C1521 350 1510 375 1490 400C1455 445 1385 500 1325 550L1241 629"/>
          <path d="M635 628C660 590 690 555 705 515C715 490 725 462 745 460C760 460 770 468 782 482V888M782 1112V1231M782 1280V1513"/>
          <path d="M323 629H1241V1002H1120M323 629V1002H456M613 1002H704M861 1002H964M782 888V984"/>
          <path d="M323 1002L386 1112 782 1204 1179 1112 1241 1002M386 1112L782 1107 1179 1112"/>
          <path d="M172 675C180 690 190 693 200 697C240 720 280 745 323 761M194 692C205 660 235 645 275 638C300 633 318 632 323 635M1392 675C1385 690 1375 697 1350 710C1310 733 1270 750 1241 761"/>
          <path d="M247 896H323M247 984H323M1241 896H1317M1241 984H1317M279 992C290 992 305 997 323 1002M1286 992C1275 992 1260 997 1241 1002M321 896V918"/>
          <path d="M386 1112C372 1220 355 1290 355 1330C355 1360 362 1375 378 1378C395 1379 405 1378 415 1377M1179 1112C1193 1220 1210 1290 1210 1330C1210 1360 1203 1375 1187 1378C1170 1379 1160 1378 1150 1377"/>
          <ellipse cx="534" cy="1002" rx="78" ry="110"/><ellipse cx="782" cy="1001" rx="78" ry="110"/><ellipse cx="1042" cy="1002" rx="78" ry="110"/>
          <path d="M480 922H588M458 984H611M458 1019L604 1053M728 922H837M706 984H860M763 984L755 1104M803 984L808 1104M728 1076Q782 1108 838 1076M732 1078L734 1088M832 1078L830 1088M988 922H1096M966 984H1119M1118 1017L972 1051"/>
          <path d="M405 1170L625 1203V1262L405 1255zM424 1173V1256M424 1233L625 1240M1160 1170L939 1203V1262L1160 1255zM1141 1173V1256M1141 1233L939 1240"/>
          <path d="M688 1214L782 1231 877 1214V1267L782 1280 688 1267zM688 1246L782 1257 877 1246M764 1228V1254M800 1228V1254"/>
        </g>
      </g>
    </svg>

    <svg class="viewcube" width="200" height="200" viewBox="0 0 200 200" role="img" aria-label="View cube">
      <defs><linearGradient id="cube" x1="0" y1="0" x2="0" y2="1"><stop offset="0" stop-color="#ececec"/><stop offset="1" stop-color="#d8d8d8"/></linearGradient><filter id="sh"><feGaussianBlur stdDeviation="3"/></filter></defs>
      <path d="M38 160H146L150 168H36z" fill="#999" filter="url(#sh)"/>
      <rect x="46" y="67" width="93" height="92" fill="url(#cube)" stroke="#999"/>
      <rect x="64" y="85" width="58" height="58" fill="#d8dbe0" opacity=".7"/>
      <text x="93" y="121" class="face">LEFT</text>
      <path d="M31 161H141" stroke="#79d87c" stroke-width="3"/><path d="M141 51V162" stroke="#7b74ee" stroke-width="2"/>
      <text x="140" y="46" class="axis z">Z</text><text x="16" y="170" class="axis y">Y</text>
    </svg>

    <aside class="side">
      <section class="browser">
        <header class="panelhead"><svg width="20" height="12" viewBox="0 0 20 12"><path d="M10 0V12L0 6zM20 0V12L10 6z" fill="#333"/></svg><h2>BROWSER</h2><button aria-label="Collapse"><svg width="20" height="20"><use href="#minus"/></svg></button></header>
        <ul class="tree">
          <li class="row root"><svg class="tw"><use href="#open"/></svg><div class="cell"><svg class="ic"><use href="#eye"/></svg><span class="name"><svg class="ic"><use href="#comp"/></svg><b>VER 3 _ 08_09_2025 EV TRIN...</b></span><svg class="dot" width="28" height="28" viewBox="0 0 28 28"><circle cx="14" cy="14" r="12" fill="#d9dfea" stroke="#555" stroke-width="2"/><circle cx="14" cy="14" r="5" fill="#333"/></svg></div></li>
          <li class="row"><svg class="tw"><use href="#closed"/></svg><div class="cell"><svg class="ic gear"><use href="#gear"/></svg><span>Document Settings</span></div></li>
          <li class="row"><svg class="tw"><use href="#closed"/></svg><div class="cell"><svg class="ic"><use href="#folder"/></svg><span>Named Views</span></div></li>
          <li class="row"><svg class="tw"><use href="#closed"/></svg><div class="cell"><svg class="ic"><use href="#folder"/></svg><span>Selection Sets</span></div></li>
          <li class="row"><svg class="tw"><use href="#closed"/></svg><div class="cell"><svg class="ic"><use href="#eyeoff"/></svg><svg class="ic"><use href="#folder"/></svg><span>Origin</span></div></li>
          <li class="row"><svg class="tw"><use href="#open"/></svg><div class="cell"><svg class="ic"><use href="#eye"/></svg><svg class="ic"><use href="#folder"/></svg><span>Analysis</span></div></li>
          <li class="row sub"><div class="cell"><svg class="ic"><use href="#eyeoff"/></svg><svg class="ic"><use href="#section"/></svg><span>Section1</span></div></li>
          <li class="row sub"><div class="cell"><svg class="ic"><use href="#eyeoff"/></svg><svg class="ic"><use href="#section"/></svg><span>Section2</span></div></li>
          <li class="row sub"><div class="cell"><svg class="ic"><use href="#eyeoff"/></svg><svg class="ic"><use href="#section"/></svg><span>Section3</span></div></li>
          <li class="row"><svg class="tw"><use href="#open"/></svg><div class="cell"><svg class="ic"><use href="#eye"/></svg><svg class="ic"><use href="#folder"/></svg><span>Bodies</span></div></li>
          <li class="row sub"><div class="cell picked"><svg class="ic"><use href="#eye"/></svg><span class="name"><svg class="ic"><use href="#body"/></svg><b>below deck</b></span></div></li>
          <li class="row sub"><div class="cell"><svg class="ic"><use href="#eyeoff"/></svg><svg class="ic"><use href="#body"/></svg><span>hard top bimini</span></div></li>
          <li class="row sub"><div class="cell"><svg class="ic"><use href="#eyeoff"/></svg><svg class="ic"><use href="#bodyorange"/></svg><span>deck (1)</span></div></li>
          <li class="row"><svg class="tw"><use href="#closed"/></svg><div class="cell"><svg class="ic"><use href="#eye"/></svg><svg class="ic"><use href="#folder"/></svg><span>Canvases</span></div></li>
          <li class="row"><svg class="tw"><use href="#closed"/></svg><div class="cell"><svg class="ic"><use href="#eye"/></svg><svg class="ic"><use href="#folder"/></svg><span>Sketches</span></div></li>
          <li class="row"><svg class="tw"><use href="#closed"/></svg><div class="cell"><svg class="ic"><use href="#eyeoff"/></svg><svg class="ic"><use href="#folder"/></svg><span>Construction</span></div></li>
        </ul>
      </section>
      <header class="panelhead comments"><h2>COMMENTS</h2><button aria-label="Expand"><svg width="20" height="20"><use href="#plus"/></svg></button></header>
    </aside>

    <div class="navbar">
      <button class="split" aria-label="Orbit"><svg width="32" height="32" viewBox="0 0 32 32"><path d="M13 31V9H10L15 1 20 9H17V31z" fill="#eee" stroke="#444" stroke-width="1"/><path d="M3 15Q15 7 27 15Q31 20 22 23M3 15Q-1 20 7 24" fill="none" stroke="#444" stroke-width="2"/><path d="M12 19L4 23 12 27z" fill="#333"/></svg><svg class="car"><use href="#caret"/></svg></button>
      <button aria-label="Look At"><svg width="32" height="32" viewBox="0 0 32 32"><path d="M2 11H30V30H2z" fill="#eee" stroke="#444" stroke-width="2"/><path d="M7 15H25V26H7z" fill="#999ea8" stroke="#555"/><path d="M3 10L14 4V8L24 4V10" fill="#ddd" stroke="#555" stroke-width="2"/></svg></button>
      <button aria-label="Pan"><svg width="32" height="34" viewBox="0 0 32 34"><path d="M11 32C8 26 2 21 1 18Q3 15 7 20L8 20 5 7Q7 4 9 8L12 16 12 3Q14 0 16 3L17 15 20 4Q22 2 23 5L21 17 27 10Q30 9 29 13L23 26V32z" fill="#fff" stroke="#444" stroke-width="2"/></svg></button>
      <button aria-label="Zoom"><svg width="34" height="34" viewBox="0 0 34 34"><circle cx="12" cy="13" r="10" fill="#e4f1ee" stroke="#666" stroke-width="2"/><path d="M19 20L30 31" stroke="#444" stroke-width="5"/><path d="M24 4H33M28 0V9M24 12H33" stroke="#333" stroke-width="2"/></svg></button>
      <button class="split" aria-label="Fit"><svg width="34" height="34" viewBox="0 0 34 34"><path d="M2 2H31V32H2z" fill="none" stroke="#666" stroke-dasharray="5 3"/><circle cx="13" cy="13" r="11" fill="#e4f1ee" stroke="#666" stroke-width="2"/><path d="M20 21L31 31" stroke="#444" stroke-width="5"/></svg><svg class="car"><use href="#caret"/></svg></button>
      <button class="split" aria-label="Display Settings"><svg width="32" height="32" viewBox="0 0 32 32"><path d="M1 1H31V23H1z" fill="#dfe6ee" stroke="#555" stroke-width="2"/><path d="M4 4H28V20H4z" fill="#86aedb" stroke="#456"/><path d="M13 24H19V28H24V31H8V28H13z" fill="#999"/></svg><svg class="car"><use href="#caret"/></svg></button>
      <button class="split" aria-label="Grid and Snaps"><svg width="30" height="32" viewBox="0 0 30 32"><path d="M1 1H29V31H1z" fill="#c3c6cd" stroke="#666" stroke-width="2"/><path d="M1 7H29M1 13H29M1 19H29M1 25H29M7 1V31M13 1V31M19 1V31M25 1V31" stroke="#888"/></svg><svg class="car"><use href="#caret"/></svg></button>
      <button class="split" aria-label="Viewports"><svg width="32" height="28" viewBox="0 0 32 28"><path d="M1 1H15V13H1zM17 1H31V13H17zM1 15H15V27H1zM17 15H31V27H17z" fill="#8db8e2" stroke="#3b6289" stroke-width="2"/></svg><svg class="car"><use href="#caret"/></svg></button>
    </div>
    <button class="assistant" aria-label="Assistant"><svg width="34" height="34" viewBox="0 0 34 34"><path d="M17 0A17 17 0 0 1 34 17V34H17A17 17 0 0 1 17 0z"/><path d="M8 19L20 10M9 24L24 11M15 24L26 13V19M20 23V21M25 24V21" fill="none" stroke="#fff" stroke-width="2"/></svg></button>
  </div>

  <div class="timeline">
    <div class="play">
      <button aria-label="Go to start"><svg width="24" height="26" viewBox="0 0 24 26"><path d="M0 0H3V26H0zM22 1V25L4 13z"/></svg></button>
      <button aria-label="Step back"><svg width="26" height="26" viewBox="0 0 26 26"><path d="M19 1V25L0 13zM22 8H25V18H22z"/></svg></button>
      <button aria-label="Play"><svg width="24" height="30" viewBox="0 0 24 30"><path d="M0 0L24 15 0 30z"/></svg></button>
      <button aria-label="Step forward"><svg width="26" height="26" viewBox="0 0 26 26"><path d="M7 1V25L26 13zM1 8H4V18H1z"/></svg></button>
      <button aria-label="Go to end"><svg width="24" height="26" viewBox="0 0 24 26"><path d="M21 0H24V26H21zM1 1V25L20 13z"/></svg></button>
    </div>
    <div class="track">
      <div class="thumb"></div>
      <div class="features" id="features"></div>
      <div class="rail"><i></i><i></i><b></b><i></i><i></i></div>
      <svg class="marker" width="24" height="64" viewBox="0 0 24 64"><path d="M0 0H24V8L14 18V64H10V18L0 8z" fill="#606060"/></svg>
    </div>
    <button class="settings" aria-label="Timeline settings"><svg width="30" height="30"><use href="#gear"/></svg></button>
  </div>

  <section class="console">
    <header><button aria-label="Collapse"><svg width="20" height="20"><use href="#minus"/></svg></button><h2>TEXT COMMANDS</h2></header>
    <textarea class="log" readonly aria-label="Text command output"></textarea>
    <form class="entry">
      <input type="text" class="cmd" placeholder="Type Text Commands Here - Type '?' For Help" aria-label="Text command">
      <label><input type="radio" name="lang" checked>Txt</label>
      <label><input type="radio" name="lang">Py</label>
      <label><input type="radio" name="lang">Js</label>
    </form>
  </section>
</main>
<script src="timeline.js"></script>
</body>
</html>
```
FILE: styles.css
```css
* { box-sizing: border-box; }
html, body { margin: 0; height: 100%; }
body {
  min-height: 100vh;
  display: flex;
  flex-direction: column;
  background: #1c1c1c;
  color: #3c3c3c;
  font: 22px/30px "Open Sans", "Noto Sans", sans-serif;
  overflow-x: hidden;
}
h1, h2, ul { margin: 0; padding: 0; font-size: inherit; font-weight: 400; list-style: none; }
button { border: 0; padding: 0; background: none; font: inherit; color: inherit; display: flex; align-items: center; }
a { color: inherit; text-decoration: none; }
svg { display: block; flex: none; }
.defs { position: absolute; width: 0; height: 0; }

/* System menu bar */
.menubar {
  display: flex;
  align-items: center;
  justify-content: space-between;
  height: 46px;
  padding: 0 0 2px 41px;
  background: #fff;
  color: #000;
  font: 26px/32px Inter, sans-serif;
}
.menus { display: flex; align-items: center; gap: 41px; }
.app { font-weight: 700; }
.status { display: flex; align-items: center; gap: 37px; white-space: nowrap; color: #222; }
.clock { font-size: 27px; margin-left: -3px; }

/* Application window */
.window {
  flex: 1;
  display: flex;
  flex-direction: column;
  min-height: 0;
  background: #f1f1f1;
  border-top: 2px solid #aaa;
  border-radius: 20px;
  overflow: hidden;
}
.titlebar {
  display: grid;
  grid-template-columns: 1fr auto 1fr;
  align-items: center;
  height: 57px;
  padding: 0 20px 0 16px;
  background: #fafafa;
  border-bottom: 2px solid #ababab;
}
.titlebar h1 { font: 600 27px/32px Inter, sans-serif; color: #4c4c4c; }
.lights { display: flex; gap: 16px; }
.lights i { width: 24px; height: 24px; border-radius: 50%; }
.red { background: #ff5f57; }
.amber { background: #febc2e; }
.green { background: #28c840; }

.tabstrip { display: flex; align-items: flex-end; height: 63px; background: #d2d2d2; }
.quick { display: flex; align-items: center; gap: 38px; width: 387px; height: 63px; padding-left: 18px; color: #666; }
.split { gap: 12px; }
.dim { color: #999; }
.home, .newtab { height: 56px; justify-content: center; background: #c2c2c2; border-radius: 8px 8px 0 0; }
.home { width: 77px; margin-right: 8px; padding: 8px 0 0 4px; }
.newtab { width: 57px; margin-left: 7px; }
.doctab { flex: 1; display: flex; align-items: center; height: 56px; background: #f3f3f3; border-radius: 8px 8px 0 0; }
.docname { flex: 1; display: flex; align-items: center; justify-content: center; gap: 10px; padding: 2px 0 0 6px; font-size: 26px; }
.close { margin-right: 13px; }
.account { display: flex; align-items: center; gap: 34px; height: 63px; padding: 0 21px 0 24px; }
.avatar { width: 50px; height: 50px; margin-left: 5px; justify-content: center; background: #eee; border-radius: 50%; font-size: 24px; }

/* Ribbon */
.ribbon { display: flex; height: 170px; padding: 6px 0 0 24px; background: #f3f3f3; }
.workspace {
  width: 219px;
  height: 122px;
  margin-top: 15px;
  justify-content: center;
  gap: 16px;
  border: 2px solid #d8d8d8;
  border-radius: 8px;
  font-weight: 600;
}
.tools { flex: 1; }
.tabs { display: flex; gap: 44px; padding-left: 34px; }
.tabs a { padding: 0 24px 6px; border-bottom: 6px solid transparent; }
.tabs .on { color: #0a9fdc; border-color: #0a9fdc; }
.groups { display: flex; padding: 4px 0 0 8px; }
.group {
  display: flex;
  flex-direction: column;
  align-items: center;
  height: 104px;
  padding: 0 20px 0 22px;
  border-right: 2px solid #d4d4d4;
}
.wide { padding: 0 28px; }
.last { border: 0; }
.icons { display: flex; align-items: center; gap: 22px; height: 68px; }
.icons svg { width: 64px; height: 64px; }
.icons .picked { background: #05a5e3; }
.icons .picked svg { width: 78px; height: 78px; }
.label { gap: 6px; margin-top: 6px; white-space: nowrap; }
.label svg { width: 12px; height: 10px; }

/* Model viewport */
.viewport { position: relative; flex: 1; display: flex; min-height: 1100px; border-top: 1px solid #ddd; }
.scene { position: absolute; inset: 0; width: 100%; height: 100%; }
.edges * { fill: none; stroke: #111; stroke-width: 1.5; vector-effect: non-scaling-stroke; }
.viewcube { position: absolute; top: 0; right: 0; }
.face { font: 700 22px "Open Sans", sans-serif; fill: #999ca1; text-anchor: middle; }
.axis { font: 24px "Open Sans", sans-serif; text-anchor: middle; }
.z { fill: #8079f0; }
.y { fill: #8cec90; }

.side { position: relative; display: flex; flex-direction: column; justify-content: space-between; width: 607px; padding: 7px 0 10px 8px; }
.panelhead {
  display: flex;
  align-items: center;
  height: 48px;
  padding: 0 20px 0 10px;
  background: #f3f3f3;
  border: 1px solid #d5d5d5;
  border-width: 1px 2px 2px 1px;
}
.panelhead h2 { flex: 1; margin-left: 19px; color: #636363; }
.comments h2 { margin-left: 39px; }
.tree { display: flex; flex-direction: column; gap: 8px; padding-top: 12px; font-size: 23px; }
.row { display: flex; align-items: center; height: 40px; padding-left: 72px; }
.sub { padding-left: 144px; }
.tw { width: 16px; height: 18px; margin-right: 20px; }
.cell { display: flex; align-items: center; height: 40px; padding: 0 20px 0 6px; background: #f3f3f3; white-space: nowrap; }
.ic { width: 32px; height: 26px; margin-right: 18px; }
.cell .ic:nth-last-child(2) { margin-right: 28px; }
.cell > .ic:first-child { height: 22px; }
.cell > .ic:first-child:nth-last-child(2) { height: 28px; }
.cell > .gear { height: 30px; color: #8f8f8f; }
.root { padding-left: 36px; }
.root .cell { width: 520px; padding-right: 14px; }
.name { display: flex; align-items: center; height: 32px; padding-left: 8px; background: #a0a0a0; color: #fff; }
.root .name { flex: 1; font-size: 24px; }
.root .cell > .ic { margin-right: 12px; }
.root .name .ic:first-child { margin-right: 26px; }
.root .dot { margin-left: 8px; }
.cell.picked { padding-right: 0; }
.cell.picked > .ic:first-child { height: 22px; margin-right: 12px; }
.picked .name { height: 40px; padding-right: 16px; background: #05a5e3; }

.navbar {
  position: absolute;
  left: 50%;
  bottom: 13px;
  transform: translateX(-50%);
  display: flex;
  align-items: center;
  gap: 19px;
  height: 48px;
  margin-left: 3px;
  padding: 0 7px;
  background: #f3f3f3;
}
.navbar .split { gap: 6px; margin-right: -6px; }
.navbar .split:last-child { margin-right: 0; }
.car { width: 12px; height: 10px; color: #333; }
.assistant { position: absolute; right: 19px; bottom: 10px; }

/* Timeline */
.timeline { display: flex; border-top: 6px solid #cacaca; background: #f1f1f1; height: 101px; }
.play { display: flex; align-items: center; gap: 25px; width: 271px; height: 110px; padding-left: 22px; fill: #5e5e5e; }
.track { position: relative; flex: 1; height: 95px; border-bottom: 2px solid #cacaca; overflow: hidden; }
.thumb { width: 29%; height: 14px; margin-left: 67.5%; border-radius: 7px; background: #cacaca; }
.features { display: flex; padding: 8px 0 0 13px; }
.feature { position: relative; width: 48px; height: 48px; flex: none; justify-content: center; border-radius: 4px; margin-bottom: 8px; }
.feature svg { width: 32px; height: 32px; }
.feature::after { content: ""; position: absolute; left: 23px; top: 46px; width: 4px; height: 10px; background: #cacaca; }
.feature.hot { background: #e4e821; }
.feature.hot::after { top: 48px; height: 8px; }
.rail { display: flex; gap: 4px; padding-left: 2px; width: 3430px; }
.rail i { width: 7px; height: 4px; background: #cacaca; }
.rail b { flex: 1; height: 4px; background: #cacaca; }
.marker { position: absolute; right: 12px; top: 18px; }
.settings { width: 84px; height: 110px; padding-left: 14px; justify-content: center; color: #7d7d7d; }

/* Text commands */
.console { background: #f1f1f1; }
.console header { display: flex; align-items: center; gap: 20px; height: 46px; padding-left: 11px; }
.console h2 { color: #636363; }
.log { display: block; width: calc(100% - 12px); height: 186px; margin-left: 9px; border: 1px solid #b4b8b8; border-top: 3px solid #999; background: #fff; resize: none; border-radius: 0; }
.entry { display: flex; align-items: center; gap: 12px; margin: 10px 0 0 9px; padding: 0 12px 14px 0; font: 25px/32px Inter, sans-serif; color: #262626; }
.cmd { flex: 1; height: 41px; margin-right: -6px; padding: 0 4px; border: 0; border-top: 1px solid #ddd; border-bottom: 2px solid #b5b5b5; background: #fdfdfd; font: inherit; }
.cmd::placeholder { color: #808080; opacity: 1; }
.entry label { display: flex; align-items: center; gap: 10px; }
.entry input[type="radio"] { appearance: none; width: 28px; height: 28px; margin: 0; border: 1px solid #d0d0d0; border-radius: 50%; background: #fff; }
.entry input[type="radio"]:checked { border: 9px solid #0a7cff; }
```
FILE: timeline.js
```js
// Design history, oldest first: [icon id, repeat count, highlighted]
const features = [
  ['flange', 2], ['unfold', 1], ['mirror', 1], ['shell', 1], ['delete', 1], ['mirror', 1],
  ['thicken', 1, true], ['flange', 1], ['convert', 1], ['fillet', 5], ['plane', 1], ['split', 1],
  ['flange', 1], ['thicken', 1], ['shell', 2], ['sketchT', 1], ['flange', 1], ['ext', 1],
  ['convert', 1], ['combine', 1], ['box', 1], ['ext', 1], ['sketchT', 1], ['combine', 1],
  ['sketchT', 1], ['ext', 2], ['offset', 3], ['ext', 2], ['ext', 2, true], ['ext', 1],
  ['ext', 1, true], ['ext', 7], ['sketchT', 2], ['box', 1], ['ext', 1], ['box', 3],
  ['ext', 10], ['hole', 3], ['sketchT', 1], ['ext', 1]
];
const strip = document.getElementById('features');
for (const [icon, count, hot] of features) {
  for (let i = 0; i < count; i++) {
    const button = document.createElement('button');
    button.className = hot ? 'feature hot' : 'feature';
    button.setAttribute('aria-label', icon);
    button.innerHTML = `<svg><use href="#${icon}"/></svg>`;
    strip.append(button);
  }
}
```
